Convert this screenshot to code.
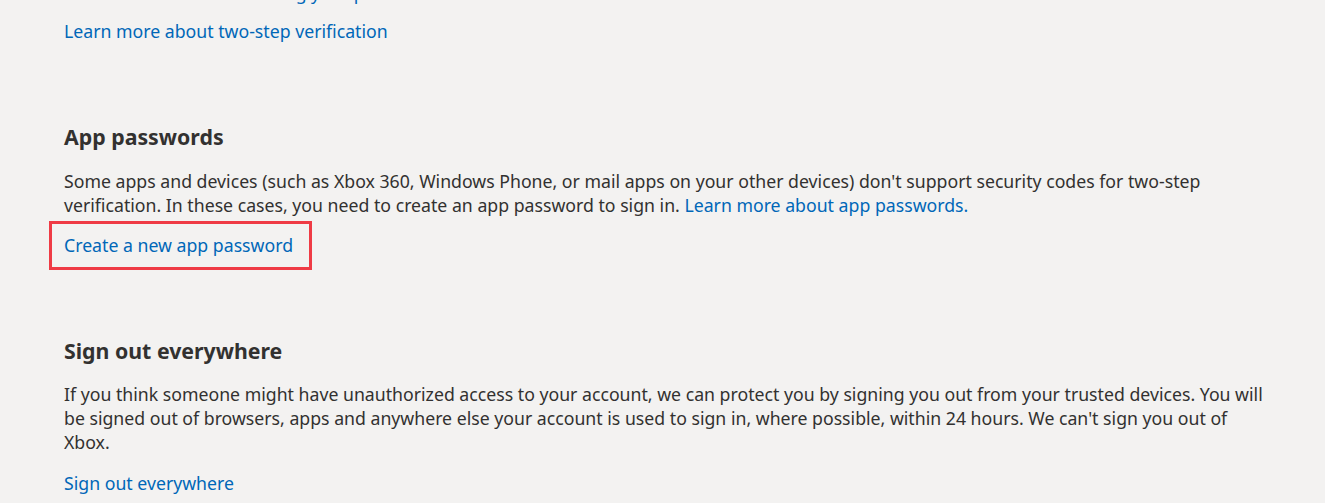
export default function App() {
  return (
    <div
      className="min-h-[503px] bg-[#f3f2f1] text-[#323130] text-[17.7px] overflow-hidden"
      style={{ fontFamily: '"Noto Sans", "Segoe UI", sans-serif' }}
    >
      <div className="pl-[64px] w-[1325px] -mt-[19px]">
        {/* previous section, tail */}
        <div className="leading-[24px]">
          <a className="text-[#0067b8]">Remove extra methods using your phone</a>
        </div>
        <div className="mt-[14px] leading-[24px]">
          <a className="text-[#0067b8]">Learn more about two-step verification</a>
        </div>

        {/* App passwords */}
        <section className="mt-[80px]">
          <h2 className="text-[21.3px] font-bold leading-[28px]">App passwords</h2>
          <p className="mt-[18px] leading-[24px]">
            Some apps and devices (such as Xbox 360, Windows Phone, or mail apps on your other devices) don't
            support security codes for two-step
            <br />
            verification. In these cases, you need to create an app password to sign in.{" "}
            <a className="text-[#0067b8]">Learn more about app passwords.</a>
          </p>
          <div className="mt-[16px] leading-[24px]">
            <span className="relative inline-block">
              <a className="text-[#0067b8]">Create a new app password</a>
              <span className="absolute -left-[15px] -top-[12px] w-[263px] h-[49px] border-[3px] border-[#ef3b45]" />
            </span>
          </div>
        </section>

        {/* Sign out everywhere */}
        <section className="mt-[80px]">
          <h2 className="text-[21.3px] font-bold leading-[28px]">Sign out everywhere</h2>
          <p className="mt-[17px] leading-[24px]">
            If you think someone might have unauthorized access to your account, we can protect you by signing you
            out from your trusted devices. You will
            <br />
            be signed out of browsers, apps and anywhere else your account is used to sign in, where possible,
            within 24 hours. We can't sign you out of
            <br />
            Xbox.
          </p>
          <div className="mt-[17px] leading-[24px]">
            <a className="text-[#0067b8]">Sign out everywhere</a>
          </div>
        </section>
      </div>
    </div>
  );
}
